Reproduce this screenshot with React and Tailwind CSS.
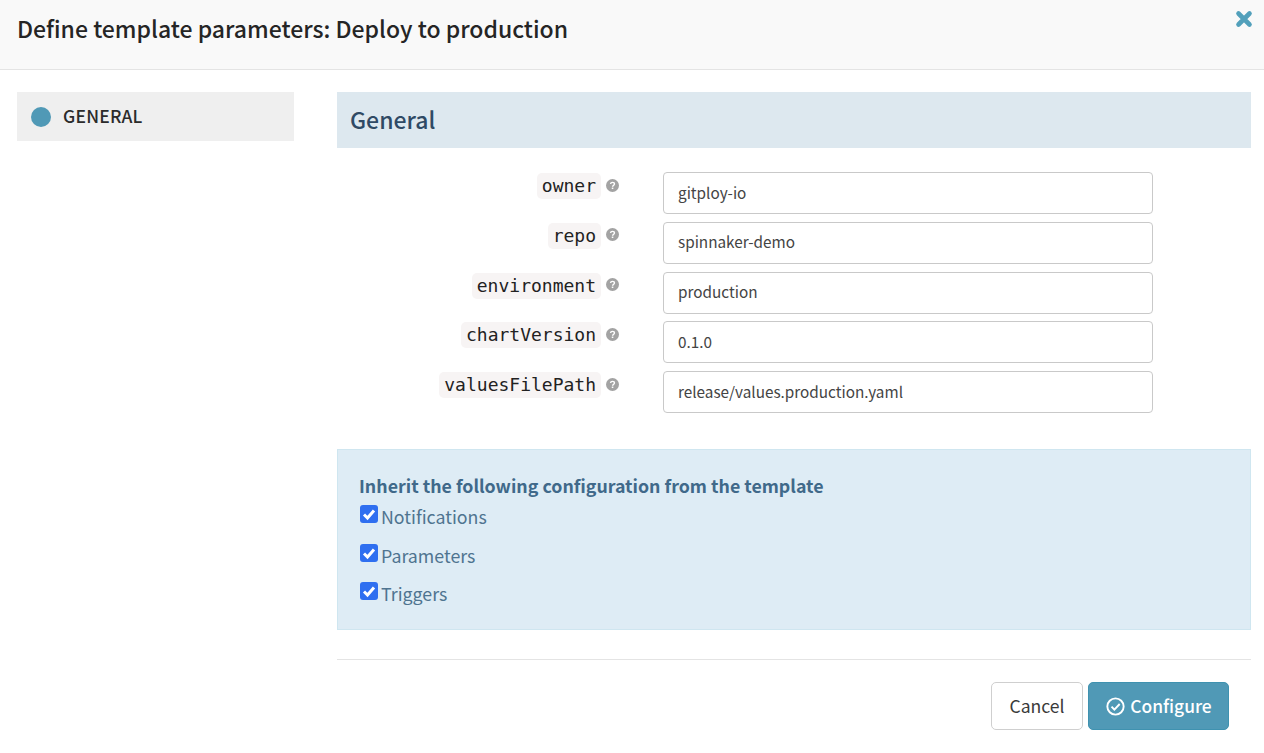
const sans = "font-['Noto_Sans_CJK_SC','Noto_Sans',sans-serif]";

const fields = [
  ["owner", "gitploy-io"],
  ["repo", "spinnaker-demo"],
  ["environment", "production"],
  ["chartVersion", "0.1.0"],
  ["valuesFilePath", "release/values.production.yaml"],
];

function Help() {
  return (
    <svg viewBox="0 0 14 14" className="w-[13px] h-[13px] shrink-0 mt-[-2px]">
      <circle cx="7" cy="7" r="7" fill="#a3a3a3" />
      <path d="M4.9 5.4C5 4.2 5.9 3.6 7 3.6c1.2 0 2.1.7 2.1 1.7 0 1.7-2 1.5-2 3" fill="none" stroke="#fff" strokeWidth="1.5" />
      <rect x="6.2" y="9.2" width="1.7" height="1.6" fill="#fff" />
    </svg>
  );
}

function Row({ name, value }) {
  return (
    <div className="flex items-start h-[41px] mb-[8.75px]">
      <div className="w-[282px] flex justify-end items-center gap-[5px] h-[28px]">
        <code className="font-['DejaVu_Sans_Mono',monospace] text-[18px] leading-[20px] h-[26px] flex items-center px-[5px] rounded-[5px] bg-[#f7f4f4] text-[#222]">{name}</code>
        <Help />
      </div>
      <input
        readOnly
        value={value}
        className={`ml-[44px] w-[490px] h-[42px] pl-[14px] pr-[15px] pb-[3px] border border-[#c9c9c9] rounded-[4px] bg-white text-[15.3px] text-[#444] outline-none ${sans}`}
      />
    </div>
  );
}

function Check({ label }) {
  return (
    <div className="flex items-start h-[38.5px]">
      <svg viewBox="0 0 18 18" className="ml-[1px] w-[18px] h-[18px] shrink-0 mt-[4px]">
        <rect width="18" height="18" rx="3" fill="#2f6ff0" />
        <path d="M4 9.5 7.5 13 14 5.5" fill="none" stroke="#fff" strokeWidth="3" />
      </svg>
      <span className="ml-[3px] text-[17.8px] leading-[24px] mt-[3px] text-[#4f7490]">{label}</span>
    </div>
  );
}

export default function App() {
  return (
    <div className={`w-[1264px] h-[753px] bg-white overflow-hidden ${sans}`}>
      <header className="relative h-[70px] bg-[#f9f9f9] border-b border-[#e4e4e4] pl-[17px] pt-[11px]">
        <h1 className="text-[23px] leading-[34px] font-medium text-[#252525]">Define template parameters: Deploy to production</h1>
        <svg viewBox="0 0 18 18" className="absolute right-[11px] top-[10px] w-[18px] h-[18px]">
          <path d="M3.5 3.5 14.5 14.5M14.5 3.5 3.5 14.5" stroke="#52a0bb" strokeWidth="4.6" strokeLinecap="round" />
        </svg>
      </header>
      <div className="flex pt-[22px] pl-[17px] pr-[13px]">
        <aside className="w-[277px] shrink-0">
          <div className="h-[49px] bg-[#efefef] flex items-center pl-[14px]">
            <span className="w-[20px] h-[20px] rounded-full bg-[#5099b6]" />
            <span className="ml-[12px] mt-[-1px] text-[17.5px] font-medium tracking-[0.2px] text-[#2b2b2b]">GENERAL</span>
          </div>
        </aside>
        <main className="ml-[43px] flex-1 min-w-0">
          <div className="h-[56px] bg-[#dde8ef] flex items-center pl-[13px]">
            <h2 className="text-[23px] mt-[-2px] font-medium text-[#2f4a65]">General</h2>
          </div>
          <div className="pt-[24px]">
            {fields.map(([n, v]) => <Row key={n} name={n} value={v} />)}
          </div>
          <div className="mt-[37px] h-[181px] bg-[#deecf5] border border-[#cfe6f0] pl-[21px] pt-[22px]">
            <div className="text-[17.8px] leading-[26px] font-bold text-[#40698a] mb-[3px]">Inherit the following configuration from the template</div>
            <Check label="Notifications" />
            <Check label="Parameters" />
            <Check label="Triggers" />
          </div>
          <div className="mt-[29px] border-t border-[#e4e4e4] flex justify-end pr-[22px] pt-[22px] gap-[5px]">
            <button className="w-[92px] h-[48px] border border-[#cfcfcf] rounded-[5px] bg-white text-[17.6px] text-[#3a3a3a]">Cancel</button>
            <button className="w-[141px] h-[48px] rounded-[5px] bg-[#5099b6] border border-[#3f92b0] text-white text-[17.4px] font-medium flex items-center justify-center gap-[5px]">
              <svg viewBox="0 0 20 20" className="w-[19px] h-[19px] ml-[1px]">
                <circle cx="10" cy="10" r="8.6" fill="none" stroke="#fff" strokeWidth="2" />
                <path d="M5.8 10.2 8.8 13.2 14.4 7.4" fill="none" stroke="#fff" strokeWidth="2" />
              </svg>
              Configure
            </button>
          </div>
        </main>
      </div>
    </div>
  );
}
